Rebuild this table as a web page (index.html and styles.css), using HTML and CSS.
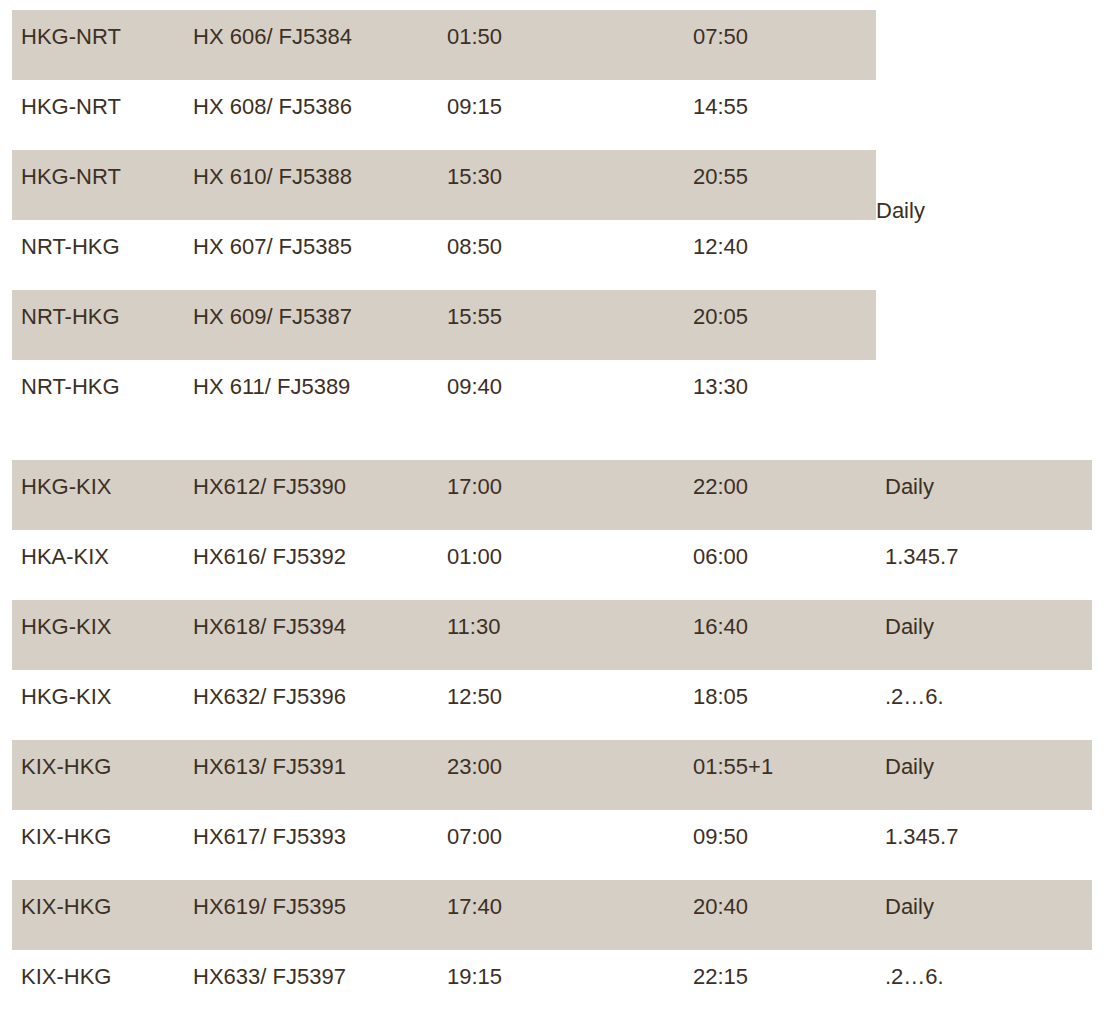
FILE: index.html
```html
<!DOCTYPE html>
<html>
<head>
<meta charset="utf-8">
<link rel="stylesheet" href="styles.css">
</head>
<body>
<table class="sched sched-first">
  <tr class="shade"><td class="c1">HKG-NRT</td><td class="c2">HX 606/ FJ5384</td><td class="c3">01:50</td><td class="c4">07:50</td><td class="daily-span" rowspan="6">Daily</td></tr>
  <tr><td class="c1">HKG-NRT</td><td class="c2">HX 608/ FJ5386</td><td class="c3">09:15</td><td class="c4">14:55</td></tr>
  <tr class="shade"><td class="c1">HKG-NRT</td><td class="c2">HX 610/ FJ5388</td><td class="c3">15:30</td><td class="c4">20:55</td></tr>
  <tr><td class="c1">NRT-HKG</td><td class="c2">HX 607/ FJ5385</td><td class="c3">08:50</td><td class="c4">12:40</td></tr>
  <tr class="shade"><td class="c1">NRT-HKG</td><td class="c2">HX 609/ FJ5387</td><td class="c3">15:55</td><td class="c4">20:05</td></tr>
  <tr><td class="c1">NRT-HKG</td><td class="c2">HX 611/ FJ5389</td><td class="c3">09:40</td><td class="c4">13:30</td></tr>
</table>
<table class="sched sched-second">
  <tr class="shade"><td class="c1">HKG-KIX</td><td class="c2">HX612/ FJ5390</td><td class="c3">17:00</td><td class="c4">22:00</td><td class="c5">Daily</td></tr>
  <tr><td class="c1">HKA-KIX</td><td class="c2">HX616/ FJ5392</td><td class="c3">01:00</td><td class="c4">06:00</td><td class="c5">1.345.7</td></tr>
  <tr class="shade"><td class="c1">HKG-KIX</td><td class="c2">HX618/ FJ5394</td><td class="c3">11:30</td><td class="c4">16:40</td><td class="c5">Daily</td></tr>
  <tr><td class="c1">HKG-KIX</td><td class="c2">HX632/ FJ5396</td><td class="c3">12:50</td><td class="c4">18:05</td><td class="c5">.2…6.</td></tr>
  <tr class="shade"><td class="c1">KIX-HKG</td><td class="c2">HX613/ FJ5391</td><td class="c3">23:00</td><td class="c4">01:55+1</td><td class="c5">Daily</td></tr>
  <tr><td class="c1">KIX-HKG</td><td class="c2">HX617/ FJ5393</td><td class="c3">07:00</td><td class="c4">09:50</td><td class="c5">1.345.7</td></tr>
  <tr class="shade"><td class="c1">KIX-HKG</td><td class="c2">HX619/ FJ5395</td><td class="c3">17:40</td><td class="c4">20:40</td><td class="c5">Daily</td></tr>
  <tr><td class="c1">KIX-HKG</td><td class="c2">HX633/ FJ5397</td><td class="c3">19:15</td><td class="c4">22:15</td><td class="c5">.2…6.</td></tr>
</table>
</body>
</html>
```
FILE: styles.css
```css
html, body {
  margin: 0;
  padding: 0;
  background: #ffffff;
}
body {
  font-family: "Liberation Sans", Arial, Helvetica, sans-serif;
  font-size: 22px;
  color: #3c3024;
}
.sched {
  border-collapse: collapse;
  table-layout: fixed;
  margin-left: 12px;
}
.sched-first {
  margin-top: 10px;
  width: 1080px;
}
.sched-second {
  margin-top: 30px;
  width: 1080px;
}
.sched td {
  height: 70px;
  box-sizing: border-box;
  padding: 14px 0 0 9px;
  vertical-align: top;
  line-height: 25px;
  white-space: nowrap;
}
.shade td {
  background: #d6cfc5;
}
.c1 { width: 172px; }
.c2 { width: 254px; }
.c3 { width: 246px; }
.c4 { width: 192px; }
.c5 { width: 216px; }
.sched td.daily-span {
  width: 216px;
  background: #ffffff;
  padding: 0 0 19px 0;
  vertical-align: middle;
}
```
